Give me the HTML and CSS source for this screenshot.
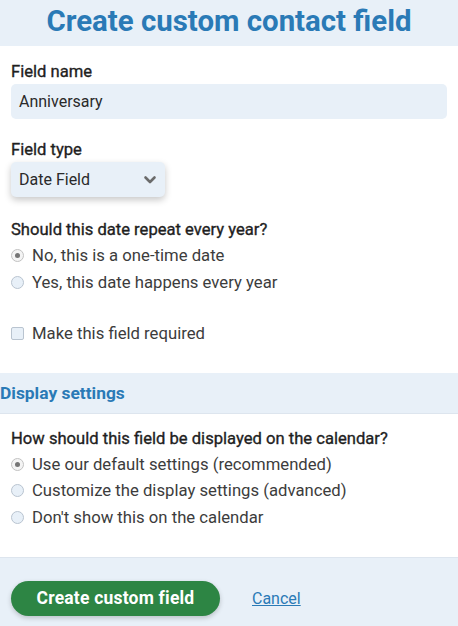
FILE: index.html
```html
<!DOCTYPE html>
<html>
<head>
<meta charset="utf-8">
<link rel="stylesheet" href="styles.css">
</head>
<body>
<header class="top">
  <h1 class="title">Create custom contact field</h1>
</header>
<main class="form">
  <section class="group">
    <div class="label">Field name</div>
    <div class="input">Anniversary</div>
  </section>
  <section class="group group-type">
    <div class="label">Field type</div>
    <div class="select">
      <span>Date Field</span>
      <svg class="chev" width="14" height="10" viewBox="0 0 14 10"><path d="M2.5 2.5 L7 7 L11.5 2.5" fill="none" stroke="#6b6b6b" stroke-width="2.6" stroke-linecap="round" stroke-linejoin="round"/></svg>
    </div>
  </section>
  <section class="group">
    <div class="label">Should this date repeat every year?</div>
    <div class="opt"><span class="radio on"></span>No, this is a one-time date</div>
    <div class="opt"><span class="radio"></span>Yes, this date happens every year</div>
  </section>
  <section class="group check-group">
    <div class="opt"><span class="check"></span>Make this field required</div>
  </section>
</main>
<div class="band">Display settings</div>
<main class="form form2">
  <section class="group">
    <div class="label">How should this field be displayed on the calendar?</div>
    <div class="opt"><span class="radio on"></span>Use our default settings (recommended)</div>
    <div class="opt"><span class="radio"></span>Customize the display settings (advanced)</div>
    <div class="opt"><span class="radio"></span>Don't show this on the calendar</div>
  </section>
</main>
<footer class="foot">
  <button class="btn">Create custom field</button>
  <a class="cancel" href="#">Cancel</a>
</footer>
</body>
</html>
```
FILE: styles.css
```css
html, body {
  margin: 0;
  padding: 0;
  background: #ffffff;
  font-family: Roboto, "Liberation Sans", sans-serif;
  color: #222;
  width: 458px;
  height: 626px;
  overflow: hidden;
}
.top {
  background: #e8f0f8;
  height: 46px;
  display: flex;
  align-items: center;
  justify-content: center;
}
.title {
  margin: 0;
  font-size: 29.4px;
  font-weight: 700;
  color: #2a7ab6;
  line-height: 1;
  padding-bottom: 2px;
}
.form {
  padding: 16px 11px 0;
}
.group {
  margin-bottom: 21px;
}
.group-type {
  margin-bottom: 23px;
}
.label {
  font-size: 16.6px;
  font-weight: 400;
  -webkit-text-stroke: 0.35px #1f1f1f;
  line-height: 20px;
  color: #1f1f1f;
  margin-bottom: 2px;
}
.input {
  background: #e8f0f8;
  height: 35px;
  border-radius: 5px;
  font-size: 16px;
  line-height: 35px;
  padding-left: 8px;
  color: #2a2a2a;
}
.select {
  width: 154px;
  height: 35px;
  box-sizing: border-box;
  background: #e8f0f8;
  border-radius: 5px;
  box-shadow: 0 3px 7px rgba(0, 0, 0, 0.22);
  display: flex;
  align-items: center;
  justify-content: space-between;
  padding: 0 8px 0 8px;
  font-size: 16px;
  color: #2a2a2a;
}
.opt {
  display: flex;
  align-items: center;
  height: 27px;
  font-size: 16.7px;
  color: #3c3c3c;
}
.radio {
  width: 11px;
  height: 11px;
  border-radius: 50%;
  border: 1px solid #b9c4d0;
  background: #e8f0f8;
  margin-right: 8px;
  box-sizing: content-box;
  position: relative;
  flex: none;
}
.radio.on {
  background: #f4f4f4;
  border-color: #c2c2c2;
}
.radio.on::after {
  content: "";
  position: absolute;
  left: 3px; top: 3px;
  width: 5px; height: 5px;
  border-radius: 50%;
  background: #757575;
}
.check {
  width: 11px;
  height: 11px;
  border: 1px solid #b9c4d0;
  background: #e8f0f8;
  border-radius: 2px;
  margin-right: 8px;
  flex: none;
}
.check-group {
  margin-top: 24px;
  margin-bottom: 26px;
}
.band {
  background: #e8f0f8;
  height: 40px;
  line-height: 40px;
  font-size: 17.4px;
  font-weight: 700;
  color: #2a7ab6;
  border-bottom: 1px solid #dde5ee;
}
.form2 {
  padding-top: 15px;
}
.form2 .opt { height: 26.5px; }
.form2 .group { margin-bottom: 26px; }
.foot {
  border-top: 1px solid #dde5ee;
  background: #e8f0f8;
  height: 70px;
  display: flex;
  align-items: flex-start;
  padding: 23px 11px 0;
  box-sizing: border-box;
}
.btn {
  background: #2d8544;
  color: #ffffff;
  border: none;
  border-radius: 18px;
  height: 35px;
  width: 209px;
  font-family: Roboto, "Liberation Sans", sans-serif;
  font-size: 17.5px;
  font-weight: 700;
  letter-spacing: 0.2px;
  box-shadow: 0 2px 5px rgba(0, 0, 0, 0.2);
  padding: 0;
}
.cancel {
  margin-left: 32px;
  font-size: 16px;
  line-height: 35px;
  color: #2a7ab6;
  text-decoration: underline;
}
```
